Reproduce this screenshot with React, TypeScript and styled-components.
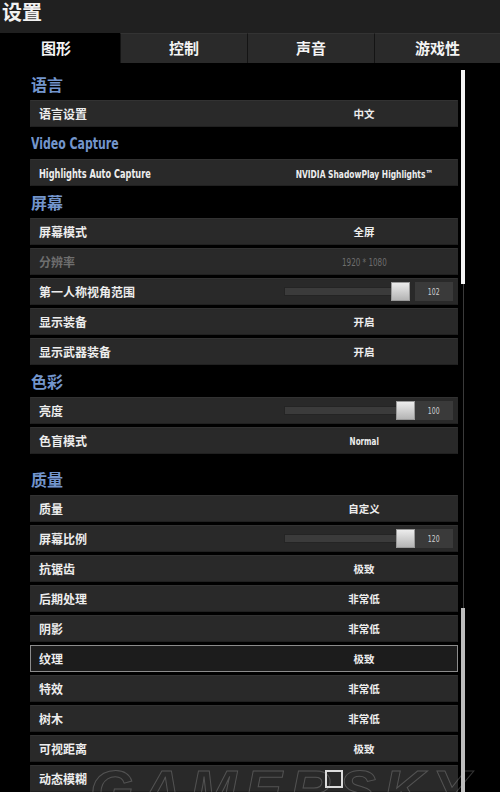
import React from 'react';
import styled, { createGlobalStyle } from 'styled-components';

const GlobalStyle = createGlobalStyle`
  html, body {
    margin: 0;
    padding: 0;
    background: #000;
  }
  body {
    font-family: "Noto Sans CJK SC", "Noto Sans", sans-serif;
  }
`;

const CONDENSED = `"DejaVu Sans Condensed", "DejaVu Sans", "Noto Sans CJK SC", sans-serif`;

type Setting =
  | { kind: 'text'; label: string; value: string; disabled?: boolean; active?: boolean; latin?: boolean }
  | { kind: 'slider'; label: string; value: number; thumb: number }
  | { kind: 'check'; label: string; checked: boolean };

interface ISection {
  title: string;
  latin?: boolean;
  spaced?: boolean;
  items: Setting[];
}

const sections: ISection[] = [
  { title: '语言', items: [{ kind: 'text', label: '语言设置', value: '中文' }] },
  {
    title: 'Video Capture',
    latin: true,
    items: [{ kind: 'text', label: 'Highlights Auto Capture', value: 'NVIDIA ShadowPlay Highlights™', latin: true }],
  },
  {
    title: '屏幕',
    items: [
      { kind: 'text', label: '屏幕模式', value: '全屏' },
      { kind: 'text', label: '分辨率', value: '1920 * 1080', disabled: true },
      { kind: 'slider', label: '第一人称视角范围', value: 102, thumb: 107 },
      { kind: 'text', label: '显示装备', value: '开启' },
      { kind: 'text', label: '显示武器装备', value: '开启' },
    ],
  },
  {
    title: '色彩',
    items: [
      { kind: 'slider', label: '亮度', value: 100, thumb: 112 },
      { kind: 'text', label: '色盲模式', value: 'Normal' },
    ],
  },
  {
    title: '质量',
    spaced: true,
    items: [
      { kind: 'text', label: '质量', value: '自定义' },
      { kind: 'slider', label: '屏幕比例', value: 120, thumb: 112 },
      { kind: 'text', label: '抗锯齿', value: '极致' },
      { kind: 'text', label: '后期处理', value: '非常低' },
      { kind: 'text', label: '阴影', value: '非常低' },
      { kind: 'text', label: '纹理', value: '极致', active: true },
      { kind: 'text', label: '特效', value: '非常低' },
      { kind: 'text', label: '树木', value: '非常低' },
      { kind: 'text', label: '可视距离', value: '极致' },
      { kind: 'check', label: '动态模糊', checked: false },
    ],
  },
];

const tabs = [
  { label: '图形', width: 120, active: true },
  { label: '控制', width: 127 },
  { label: '声音', width: 127 },
  { label: '游戏性', width: 126 },
];

const isLatin = (s: string) => /^[\x20-\x7e™]+$/.test(s);

const Screen = styled.div`
  position: relative;
  width: 500px;
  height: 792px;
  overflow: hidden;
  background: #000;
  display: flex;
  flex-direction: column;
`;

const Header = styled.header`
  height: 33px;
  flex: 0 0 33px;
  background: #202020;
  display: flex;
  align-items: flex-start;
`;

const Title = styled.h1`
  margin: 1px 0 0 2px;
  font-size: 20px;
  font-weight: 700;
  line-height: 22px;
  color: #f2f2f2;
`;

const TabBar = styled.nav`
  height: 30px;
  flex: 0 0 30px;
  display: flex;
  background: #000;
`;

const Tab = styled.div<{ $active?: boolean; $w: number }>`
  width: ${(p) => p.$w}px;
  box-sizing: border-box;
  display: flex;
  align-items: center;
  justify-content: center;
  padding-right: ${(p) => (p.$active ? 8 : 0)}px;
  padding-bottom: 2px;
  background: ${(p) => (p.$active ? '#000' : '#2a2a2a')};
  border-left: ${(p) => (p.$active ? 'none' : '1px solid #141414')};
  border-top: ${(p) => (p.$active ? 'none' : '1px solid #333')};
  color: #f4f4f4;
  font-size: 15px;
  font-weight: 700;
`;

const Body = styled.div`
  flex: 1;
  display: flex;
  min-height: 0;
`;

const List = styled.main`
  width: 428px;
  margin-left: 30px;
  padding-top: 8px;
`;

const ScrollColumn = styled.div`
  width: 4px;
  margin-left: 3px;
  padding-top: 7px;
  display: flex;
  flex-direction: column;
  align-items: center;
`;

const ThumbTop = styled.div`
  width: 4px;
  height: 214px;
  background: #f4f4f4;
`;

const TrackLine = styled.div`
  width: 1px;
  height: 324px;
  background: #3a3a3a;
`;

const ThumbBottom = styled.div`
  width: 4px;
  flex: 1;
  background: #bcbcbc;
`;

/* latin text in the game UI is a narrow display face */
const Narrow = styled.span<{ $origin?: string }>`
  display: inline-block;
  font-family: ${CONDENSED};
  transform: scaleX(0.76);
  transform-origin: ${(p) => p.$origin || 'left'} center;
`;

const Heading = styled.h2<{ $spaced?: boolean }>`
  margin: ${(p) => (p.$spaced ? 12 : 0)}px 0 3px 1px;
  height: 26px;
  display: flex;
  align-items: center;
  font-size: 16px;
  font-weight: 700;
  color: #7395cc;
`;

const Row = styled.div<{ $active?: boolean }>`
  height: 27px;
  margin-bottom: 3px;
  box-sizing: border-box;
  display: grid;
  grid-template-columns: 1fr 186px;
  align-items: center;
  background: ${(p) => (p.$active ? '#1c1c1c' : '#292929')};
  border: 1px solid ${(p) => (p.$active ? '#8c8c8c' : '#292929')};
  border-top-color: ${(p) => (p.$active ? '#8c8c8c' : '#323232')};
  border-bottom-color: ${(p) => (p.$active ? '#8c8c8c' : '#202020')};
`;

const Label = styled.span<{ $disabled?: boolean }>`
  padding-left: 8px;
  font-size: 12px;
  font-weight: 700;
  color: ${(p) => (p.$disabled ? '#6e6e6e' : '#ededed')};
  white-space: nowrap;
`;

const Value = styled.span<{ $disabled?: boolean; $latin?: boolean }>`
  text-align: center;
  font-size: ${(p) => (p.$latin ? 11 : 10.5)}px;
  font-weight: ${(p) => (p.$disabled ? 400 : 700)};
  color: ${(p) => (p.$disabled ? '#6e6e6e' : '#ededed')};
  white-space: nowrap;
`;

const Slider = styled.div`
  display: flex;
  align-items: center;
  padding-left: 13px;
`;

const TrackArea = styled.div`
  position: relative;
  width: 131px;
  height: 19px;
  display: flex;
  align-items: center;
`;

const Track = styled.div`
  width: 124px;
  height: 9px;
  box-sizing: border-box;
  background: #3b3b3b;
  border: 1px solid #242424;
`;

const Knob = styled.div`
  position: absolute;
  top: 0;
  width: 19px;
  height: 19px;
  box-sizing: border-box;
  background: linear-gradient(#ececec, #b4b4b4);
  border: 1px solid #9a9a9a;
`;

const NumBox = styled.div`
  width: 38px;
  height: 19px;
  display: flex;
  align-items: center;
  justify-content: center;
  background: #3a3a3a;
  font-size: 9px;
  color: #d0d0d0;
`;

const CheckCell = styled.div`
  display: flex;
  align-items: center;
  padding-left: 54px;
`;

const CheckBox = styled.div<{ $checked?: boolean }>`
  width: 18px;
  height: 18px;
  box-sizing: border-box;
  border: 2px solid #dcdcdc;
  background: ${(p) => (p.$checked ? '#dcdcdc' : 'transparent')};
`;

const Watermark = styled.div`
  position: absolute;
  left: 90px;
  top: 762px;
  font-family: "Liberation Sans", Arial, sans-serif;
  font-size: 56px;
  font-weight: 700;
  font-style: italic;
  letter-spacing: 8px;
  line-height: 1;
  color: transparent;
  -webkit-text-stroke: 1px rgba(190, 190, 190, 0.28);
  pointer-events: none;
`;

const Txt = ({ text, origin }: { text: string; origin?: string }) =>
  isLatin(text) ? <Narrow $origin={origin}>{text}</Narrow> : <>{text}</>;

const SettingRow = ({ item }: { item: Setting }) => {
  if (item.kind === 'slider') {
    return (
      <Row>
        <Label>{item.label}</Label>
        <Slider>
          <TrackArea>
            <Track />
            <Knob style={{ left: item.thumb }} />
          </TrackArea>
          <NumBox>
            <Narrow $origin="center">{item.value}</Narrow>
          </NumBox>
        </Slider>
      </Row>
    );
  }
  if (item.kind === 'check') {
    return (
      <Row>
        <Label>{item.label}</Label>
        <CheckCell>
          <CheckBox $checked={item.checked} />
        </CheckCell>
      </Row>
    );
  }
  return (
    <Row $active={item.active}>
      <Label $disabled={item.disabled}>
        <Txt text={item.label} />
      </Label>
      <Value $disabled={item.disabled} $latin={item.latin}>
        <Txt text={item.value} origin="center" />
      </Value>
    </Row>
  );
};

const App = () => (
  <Screen>
    <GlobalStyle />
    <Header>
      <Title>设置</Title>
    </Header>
    <TabBar>
      {tabs.map((t) => (
        <Tab key={t.label} $active={t.active} $w={t.width}>
          {t.label}
        </Tab>
      ))}
    </TabBar>
    <Body>
      <List>
        {sections.map((s) => (
          <section key={s.title}>
            <Heading $spaced={s.spaced}>
              <Txt text={s.title} />
            </Heading>
            {s.items.map((item) => (
              <SettingRow key={item.label} item={item} />
            ))}
          </section>
        ))}
      </List>
      <ScrollColumn>
        <ThumbTop />
        <TrackLine />
        <ThumbBottom />
      </ScrollColumn>
    </Body>
    <Watermark>GAMERSKY</Watermark>
  </Screen>
);

export default App;
